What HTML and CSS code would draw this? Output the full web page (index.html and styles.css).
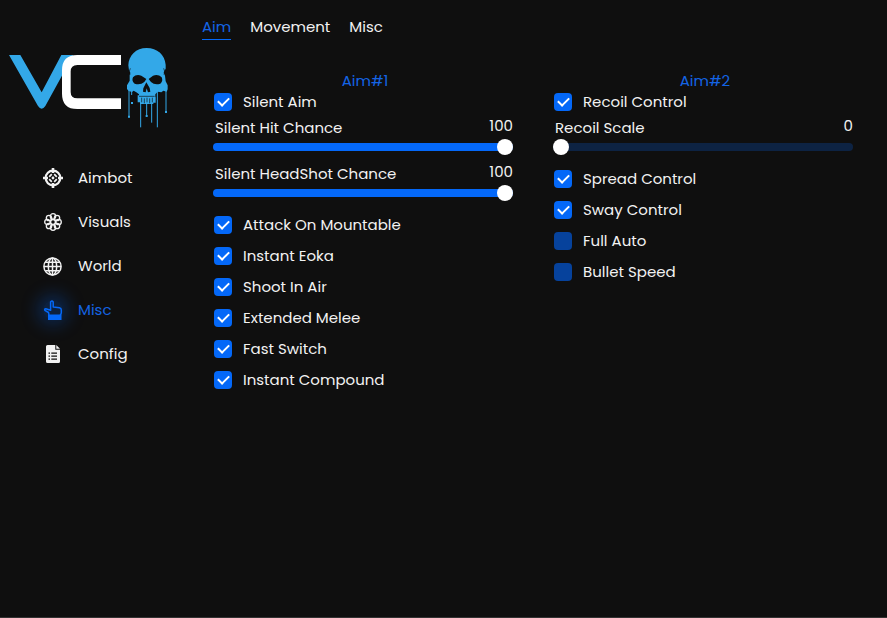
FILE: index.html
```html
<!DOCTYPE html>
<html lang="en">
<head>
    <meta charset="UTF-8">
    <meta name="viewport" content="width=device-width, initial-scale=1.0">
    <title>VC - Misc</title>
    <link rel="stylesheet" href="styles.css">
</head>
<body>

<aside class="sidebar">
    <svg class="logo" viewBox="0 0 570 315" role="img" aria-label="VC">
        <path fill="#33a8e8" d="M27 60H61L125 172L184 60H220L136 213Q125 229 114 213Z"/>
        <path fill="#fff" d="M363 60V90H232Q212 90 212 110V171Q212 190 232 190H363V222H232Q186 222 186 176V106Q186 60 232 60Z"/>
        <!-- skull -->
        <path fill="#33a8e8" fill-rule="evenodd" d="M440 39C408 39 386 61 385 91L387 106L391 113L389 121L389 137L381 151L381 162L386 168L396 171L401 167L409 172L417 178L417 190L466 190L466 178L473 170L484 172L490 167L500 170L503 163L503 151L497 139L495 122L491 112L497 101L497 89C494 59 472 39 440 39Z
            M399 127Q408 117 424 122L439 132L433 141Q421 151 404 146Q394 138 399 127Z
            M446 132L459 122Q475 117 485 127Q490 138 481 146Q464 151 453 141Z
            M439 142L430 160L429 170L437 172L440 160L444 172L451 170L449 159Z"/>
        <path class="crack" d="M391 100Q385 110 390 119M491 100Q497 110 492 119"/>
        <path fill="#33a8e8" d="M413 181H420V187H426V182H433V186H440V182H447V186H454V181H461V187H467V203H460V207H420V202H413Z"/>
        <path class="crack" d="M417 184H464M425 188V202M433 190V205M441 188V202M449 190V205M457 188V202"/>
        <path class="drips" d="M387 164V247M395 168V180M422 203V277M440 205V243M455 203V263M472 168V277M498 164V233"/>
        <path fill="#33a8e8" d="M393 201H399V207H393ZM384 242H390V248H384ZM437 240H443V246H437ZM495 228H501V234H495Z"/>
    </svg>

    <nav class="menu">
        <a class="menu-item" href="#aimbot">
            <svg class="icon" viewBox="0 0 20 20">
                <g fill="none" stroke="currentColor">
                    <circle cx="10" cy="10" r="7.3" stroke-width="2.2"/>
                    <path stroke-width="2.6" d="M10 0V5M10 15V20M0 10H5M15 10H20"/>
                    <path stroke-width="1.8" d="M6.2 8.8L8.8 6.2M11.2 6.2L13.8 8.8M13.8 11.2L11.2 13.8M8.8 13.8L6.2 11.2"/>
                </g>
                <circle cx="10" cy="10" r="1.4" fill="currentColor"/>
            </svg>
            Aimbot
        </a>
        <a class="menu-item" href="#visuals">
            <svg class="icon" viewBox="0 0 20 20">
                <g fill="none" stroke="currentColor" stroke-width="1.3">
                    <circle cx="10" cy="10" r="2.4"/>
                    <circle cx="10" cy="4.4" r="2.7"/>
                    <circle cx="14" cy="6" r="2.7"/>
                    <circle cx="15.6" cy="10" r="2.7"/>
                    <circle cx="14" cy="14" r="2.7"/>
                    <circle cx="10" cy="15.6" r="2.7"/>
                    <circle cx="6" cy="14" r="2.7"/>
                    <circle cx="4.4" cy="10" r="2.7"/>
                    <circle cx="6" cy="6" r="2.7"/>
                </g>
            </svg>
            Visuals
        </a>
        <a class="menu-item" href="#world">
            <svg class="icon" viewBox="0 0 20 20">
                <g fill="none" stroke="currentColor" stroke-width="1.5">
                    <circle cx="9.5" cy="10.5" r="8.6"/>
                    <ellipse cx="9.5" cy="10.5" rx="4.2" ry="8.6"/>
                    <path d="M9.5 2V19M1 10.5H18M2.3 6.2H16.7M2.3 14.8H16.7"/>
                </g>
            </svg>
            World
        </a>
        <a class="menu-item active" href="#misc" aria-current="page">
            <svg class="icon" viewBox="0 0 20 20">
                <path fill="none" stroke="currentColor" stroke-width="1.5" stroke-linejoin="round" d="M6 15L5.5 12.5L1.8 10.3Q1.2 9 2.8 8.7L7.6 10.2V2Q9 .2 10.2 2V7L16.5 7.8Q18.3 8.2 18.3 10V13L17.2 15.5"/>
                <path fill="currentColor" d="M5 14.5H18.5V20H5Z"/>
            </svg>
            Misc
        </a>
        <a class="menu-item" href="#config">
            <svg class="icon" viewBox="0 0 20 20">
                <path fill="currentColor" d="M4.5 1H12.3V5.7H17V17.5Q17 19 15.5 19H4.5Q3 19 3 17.5V2.5Q3 1 4.5 1ZM13.3 1L17 4.7H13.3Z"/>
                <path stroke="#0f0f0f" stroke-width="1.3" d="M5.5 9.2H7M8.3 9.2H14M5.5 12.2H7M8.3 12.2H14M5.5 15.2H7M8.3 15.2H14"/>
            </svg>
            Config
        </a>
    </nav>
</aside>

<main class="content">
    <nav class="tabs">
        <a class="tab active" href="#aim">Aim</a>
        <a class="tab" href="#movement">Movement</a>
        <a class="tab" href="#misc-tab">Misc</a>
    </nav>

    <div class="columns">
        <section class="group">
            <h2>Aim#1</h2>
            <label class="check"><input type="checkbox" checked>Silent Aim</label>
            <div class="slider">
                <div class="slider-head">
                    <label for="hit">Silent Hit Chance</label>
                    <output for="hit">100</output>
                </div>
                <input type="range" id="hit" min="0" max="100" value="100" style="--value: 100%">
            </div>
            <div class="slider">
                <div class="slider-head">
                    <label for="head">Silent HeadShot Chance</label>
                    <output for="head">100</output>
                </div>
                <input type="range" id="head" min="0" max="100" value="100" style="--value: 100%">
            </div>
            <label class="check"><input type="checkbox" checked>Attack On Mountable</label>
            <label class="check"><input type="checkbox" checked>Instant Eoka</label>
            <label class="check"><input type="checkbox" checked>Shoot In Air</label>
            <label class="check"><input type="checkbox" checked>Extended Melee</label>
            <label class="check"><input type="checkbox" checked>Fast Switch</label>
            <label class="check"><input type="checkbox" checked>Instant Compound</label>
        </section>

        <section class="group">
            <h2>Aim#2</h2>
            <label class="check"><input type="checkbox" checked>Recoil Control</label>
            <div class="slider">
                <div class="slider-head">
                    <label for="recoil">Recoil Scale</label>
                    <output for="recoil">0</output>
                </div>
                <input type="range" id="recoil" min="0" max="100" value="0" style="--value: 0%">
            </div>
            <label class="check"><input type="checkbox" checked>Spread Control</label>
            <label class="check"><input type="checkbox" checked>Sway Control</label>
            <label class="check"><input type="checkbox">Full Auto</label>
            <label class="check"><input type="checkbox">Bullet Speed</label>
        </section>
    </div>
</main>

<script>
document.querySelectorAll(".slider").forEach((slider) => {
    const range = slider.querySelector("input");
    const out = slider.querySelector("output");

    range.addEventListener("input", () => {
        out.textContent = range.value;
        range.style.setProperty("--value", range.value + "%");
    });
});
</script>

</body>
</html>
```
FILE: styles.css
```css
:root { --bg: #0f0f0f; --blue: #0468f8; --blue-text: #1464e4; --blue-off: #06429c; --track: #0d2343; --text: #f2f2f2; }

* { box-sizing: border-box; }

body { margin: 0; min-height: 100vh; display: flex; background: var(--bg); color: var(--text); font-family: Poppins, Inter, sans-serif; font-size: 15px; line-height: 22px; border-bottom: 1px solid #333; }

a { color: inherit; text-decoration: none; }

/* --- Sidebar --- */
.sidebar { flex: 0 0 190px; padding-top: 35px; }
.logo { display: block; width: 100%; }
.crack { fill: none; stroke: var(--bg); stroke-width: 2; }
.drips { fill: none; stroke: #33a8e8; stroke-width: 3; }

.menu { margin-top: 16px; padding-left: 43px; }
.menu-item { display: flex; align-items: center; gap: 15px; height: 44px; }
.menu-item.active { color: var(--blue-text); }
.icon { width: 20px; height: 20px; border-radius: 50%; overflow: visible; }
.active .icon { color: var(--blue); background: rgba(4,104,248,0.2); box-shadow: 0 0 18px 5px rgba(4,104,248,0.3); }

/* --- Tabs --- */
.content { flex: 1; min-width: 0; padding: 16px 34px 16px 12px; }
.tabs { display: flex; gap: 19px; }
.tab { padding-bottom: 1px; border-bottom: 1px solid transparent; }
.tab.active { color: var(--blue-text); border-bottom-color: var(--blue); }

/* --- Option groups --- */
.columns { display: grid; grid-template-columns: 1fr 1fr; gap: 40px; margin-top: 32px; padding-left: 11px; }
.group h2 { margin: 0; font-size: 15px; font-weight: 400; line-height: 18px; text-align: center; color: var(--blue-text); padding-left: 4px; margin-bottom: -4px; }

.check { display: flex; align-items: center; gap: 11px; height: 31px; padding-left: 1px; }
.check input { appearance: none; width: 18px; height: 18px; margin: 0; border-radius: 4px; background: var(--blue-off); display: grid; place-items: center; }
.check input:checked { background: var(--blue); }
.check input:checked::before { content: ""; width: 9px; height: 5px; margin-bottom: 2px; border: solid #fff; border-width: 0 0 2px 2px; transform: rotate(-45deg); }

.slider { padding-bottom: 8px; }
.slider-head { display: flex; justify-content: space-between; padding-left: 2px; }
.slider-head output { line-height: 18px; }

input[type="range"] { appearance: none; display: block; width: 100%; height: 16px; margin: 0; background: none; }
input[type="range"]::-webkit-slider-runnable-track { height: 8px; border-radius: 4px; background: linear-gradient(90deg, var(--blue) var(--value), var(--track) var(--value)); }
input[type="range"]::-webkit-slider-thumb { appearance: none; width: 16px; height: 16px; margin-top: -4px; border-radius: 50%; background: #fff; }
```
